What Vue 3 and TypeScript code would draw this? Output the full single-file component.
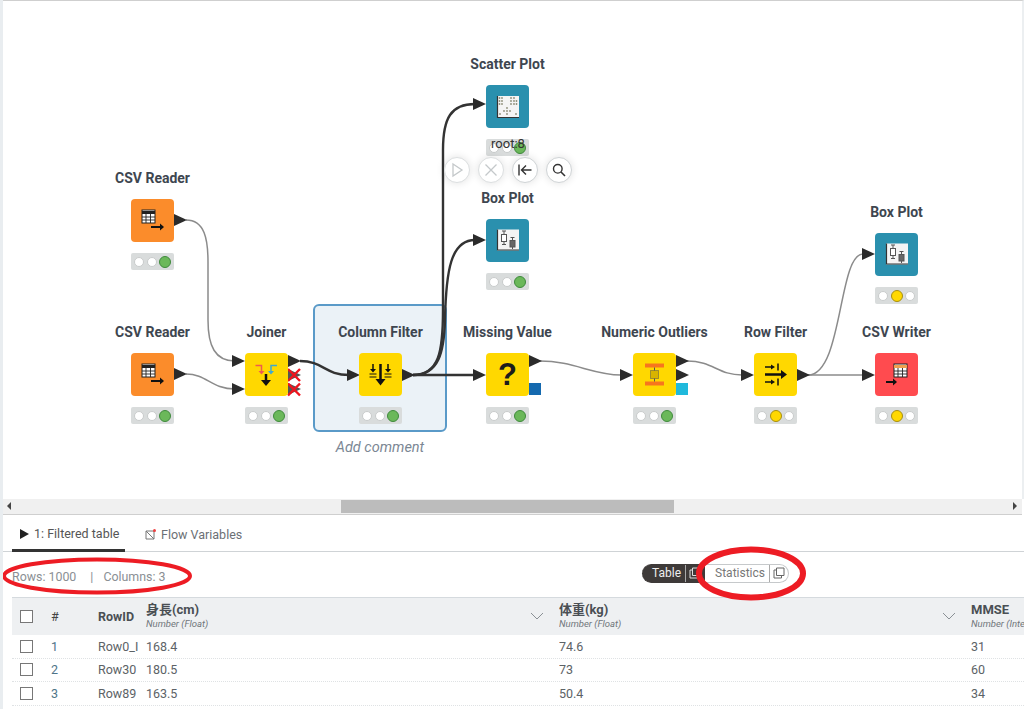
<template>
  <div class="page">
    <section class="canvas">
      <div class="selection"></div>
      <div class="comment">Add comment</div>

      <svg class="edges" width="1021" height="498" viewBox="0 0 1021 498">
        <path v-for="e in edges" :key="e.d" :d="e.d" :class="['edge', e.kind]" />
        <polygon
          v-for="p in ports"
          :key="p.x + '-' + p.y"
          :points="`${p.x},${p.y - 6} ${p.x + 13},${p.y} ${p.x},${p.y + 6}`"
          :fill="p.dim ? '#555' : '#2b2b2b'"
        />
        <rect x="526" y="383" width="12" height="12" fill="#1469af" />
        <rect x="673" y="383" width="12" height="12" fill="#20b9dc" />
        <g class="cross">
          <path d="M285 369l12 12m0-12l-12 12" />
          <path d="M285 383.500l12 12m0-12l-12 12" />
        </g>
      </svg>

      <div
        v-for="n in nodes"
        :key="n.label + n.x"
        class="node"
        :style="{ left: n.x - 50 + 'px', top: n.y - 31 + 'px' }"
      >
        <div class="label">{{ n.label }}</div>
        <div class="box" :style="{ background: colors[n.color] }">
          <svg width="43" height="43" viewBox="0 0 43 43">
            <template v-if="n.icon === 'reader'">
              <rect x="11" y="11" width="13" height="13" fill="#fff" stroke="#222" />
              <path d="M11 13.500h13" stroke="#222" stroke-width="3" />
              <path d="M11 18h13M11 21h13M15 15v9M19.500 15v9" stroke="#222" stroke-width="0.900" />
              <path d="M20 28h10" stroke="#111" stroke-width="2" />
              <path d="M29 24.500l4 3.500-4 3.500z" fill="#111" />
            </template>
            <template v-else-if="n.icon === 'writer'">
              <rect x="19" y="11" width="13" height="13" fill="#fff" stroke="#222" />
              <path d="M19 13.500h13" stroke="#f0a050" stroke-width="3" />
              <path d="M19 18h13M19 21h13M23 15v9M27.500 15v9" stroke="#222" stroke-width="0.900" />
              <path d="M11 29h8" stroke="#111" stroke-width="2" />
              <path d="M18 25.500l4 3.500-4 3.500z" fill="#111" />
            </template>
            <template v-else-if="n.icon === 'joiner'">
              <path d="M10.500 12.500h6v6" fill="none" stroke="#ef5a50" stroke-width="1.500" />
              <path d="M13.500 18h6l-3 3.500z" fill="#ef5a50" />
              <path d="M32 12.500h-6v6" fill="none" stroke="#3fa9d0" stroke-width="1.500" />
              <path d="M23 18h6l-3 3.500z" fill="#3fa9d0" />
              <path d="M21 21v8" stroke="#111" stroke-width="2.500" />
              <path d="M16 27h10l-5 6z" fill="#111" />
            </template>
            <template v-else-if="n.icon === 'column'">
              <path d="M21.500 11v17" stroke="#111" stroke-width="2.500" />
              <path d="M16.500 26h10l-5 6.500z" fill="#111" />
              <path d="M14 11v6M29 11v6" stroke="#111" stroke-width="1.500" />
              <path d="M11 16h6l-3 3.500zM26 16h6l-3 3.500z" fill="#111" />
              <path d="M10.500 21h7M10.500 24h7M25.500 21h7M25.500 24h7" stroke="#111" stroke-width="1.100" />
            </template>
            <template v-else-if="n.icon === 'missing'">
              <text x="21.500" y="32" text-anchor="middle" class="qmark">?</text>
            </template>
            <template v-else-if="n.icon === 'outliers'">
              <rect x="12" y="10.500" width="19" height="4" fill="#f7761e" />
              <rect x="12" y="28.500" width="19" height="4" fill="#f7761e" />
              <rect x="17.500" y="17.500" width="8" height="8" fill="#d8b400" stroke="#555" stroke-dasharray="1 1" />
              <path d="M21.500 14.500v3M21.500 25.500v3" stroke="#555" />
            </template>
            <template v-else-if="n.icon === 'row'">
              <path d="M11 21.500h18" stroke="#111" stroke-width="2.500" />
              <path d="M27 17l6 4.500-6 4.500z" fill="#111" />
              <path d="M11 14h7M11 29h7" stroke="#111" stroke-width="1.500" />
              <path d="M17 11.500l4 2.500-4 2.500zM17 26.500l4 2.500-4 2.500z" fill="#111" />
              <path d="M24 10.500v7M24 25.500v7" stroke="#111" stroke-width="1.500" />
            </template>
            <template v-else-if="n.icon === 'box'">
              <rect x="11" y="10.500" width="22" height="21" fill="#f4f4f4" />
              <path d="M11.500 10.500v20.500H33" fill="none" stroke="#333" stroke-width="1.200" />
              <path d="M16 12h4M18 12v3.500M18 22.500v3M16 25.500h4M24.500 18.500h4M26.500 18.500v3M26.500 28v2" stroke="#555" />
              <rect x="15.500" y="15.500" width="5" height="7" fill="#fff" stroke="#555" />
              <rect x="24" y="21.500" width="5" height="6.500" fill="#666" stroke="#555" />
            </template>
            <template v-else>
              <rect x="11" y="11" width="22" height="22" fill="#f4f4f4" />
              <path d="M11.500 11v21.500H33" fill="none" stroke="#333" stroke-width="1.200" />
              <g fill="#8d8d78">
                <circle v-for="d in scatterDots" :key="d[0] + '-' + d[1]" :cx="d[0]" :cy="d[1]" r="0.900" />
              </g>
            </template>
          </svg>
        </div>
        <div class="lights">
          <span v-for="i in [0, 1, 2]" :key="i" :class="['light', i === n.state ? (i === 2 ? 'green' : 'yellow') : '']"></span>
        </div>
      </div>

      <div class="node-name">root:8</div>
      <div class="toolbar">
        <button class="tool off">
          <svg width="16" height="16" viewBox="0 0 16 16"><path d="M4 2l9 6-9 6z" fill="none" stroke="#c4c8ca" stroke-width="1.300" /></svg>
        </button>
        <button class="tool off">
          <svg width="16" height="16" viewBox="0 0 16 16"><path d="M2.500 2.500l11 11m0-11l-11 11" stroke="#c4c8ca" stroke-width="1.300" /></svg>
        </button>
        <button class="tool">
          <svg width="16" height="16" viewBox="0 0 16 16"><path d="M2 2.500v11M14.500 8H5M9 3.500L4.500 8 9 12.500" fill="none" stroke="#333" stroke-width="1.400" /></svg>
        </button>
        <button class="tool">
          <svg width="16" height="16" viewBox="0 0 16 16"><circle cx="6.800" cy="6.800" r="4.300" fill="none" stroke="#333" stroke-width="1.400" /><path d="M10 10l4 4" stroke="#333" stroke-width="1.600" /></svg>
        </button>
      </div>
    </section>

    <div class="scrollbar">
      <span class="arrow left"></span>
      <span class="thumb"></span>
      <span class="arrow right"></span>
    </div>

    <section class="panel">
      <nav class="tabs">
        <div class="tab active">
          <svg width="9" height="10" viewBox="0 0 9 10"><path d="M0 0l9 5-9 5z" fill="#222" /></svg>
          1: Filtered table
        </div>
        <div class="tab">
          <svg width="11" height="11" viewBox="0 0 11 11">
            <path d="M1 2h8v8H1zM1 2l8 8" fill="none" stroke="#777" />
            <circle cx="9.500" cy="1.500" r="1.500" fill="#ef4040" />
          </svg>
          Flow Variables
        </div>
      </nav>

      <div class="info">
        <div class="counts">
          <span>Rows: 1000</span>
          <span class="sep">|</span>
          <span>Columns: 3</span>
        </div>
        <div class="switch">
          <div class="seg on">
            <span class="seg-text">Table</span>
            <span class="seg-icon">
              <svg width="12" height="12" viewBox="0 0 12 12"><path d="M3.500 1h7.500v7.500H3.500zM3.500 3H1v8h7.500V8.500" fill="none" stroke="#ddd" /></svg>
            </span>
          </div>
          <div class="seg">
            <span class="seg-text">Statistics</span>
            <span class="seg-icon">
              <svg width="12" height="12" viewBox="0 0 12 12"><path d="M3.500 1h7.500v7.500H3.500zM3.500 3H1v8h7.500V8.500" fill="none" stroke="#666" /></svg>
            </span>
          </div>
        </div>
      </div>

      <div class="table">
        <div class="row head">
          <div class="cell"><span class="check"></span></div>
          <div class="cell num">#</div>
          <div class="cell rowid">RowID</div>
          <div v-for="(c, i) in columns" :key="c.name" class="cell col">
            <div class="col-head">
              <div class="col-name">{{ c.name }}</div>
              <div class="col-type">{{ c.type }}</div>
            </div>
            <svg v-if="i < 2" class="chev" width="14" height="8" viewBox="0 0 14 8"><path d="M1 1l6 6 6-6" fill="none" stroke="#8a9095" /></svg>
          </div>
        </div>
        <div v-for="r in rows" :key="r.n" class="row">
          <div class="cell"><span class="check"></span></div>
          <div class="cell num">{{ r.n }}</div>
          <div class="cell rowid plain">{{ r.id }}</div>
          <div class="cell">{{ r.h }}</div>
          <div class="cell">{{ r.w }}</div>
          <div class="cell">{{ r.m }}</div>
        </div>
      </div>

      <svg class="marks" width="1024" height="194" viewBox="0 0 1024 194">
        <ellipse cx="97" cy="61" rx="93" ry="16.500" />
        <ellipse cx="751" cy="58.500" rx="52" ry="24" class="thick" />
      </svg>
    </section>
  </div>
</template>

<script setup lang="ts">
type Icon = 'reader' | 'writer' | 'joiner' | 'column' | 'missing' | 'outliers' | 'row' | 'box' | 'scatter'
type Color = 'orange' | 'yellow' | 'teal' | 'red'

interface WfNode {
  label: string
  x: number
  y: number
  color: Color
  icon: Icon
  state: number
}

const colors: Record<Color, string> = {
  orange: '#fb8c2b',
  yellow: '#ffd800',
  teal: '#2a90ae',
  red: '#ff4b4f',
}

const nodes: WfNode[] = [
  { label: 'Scatter Plot', x: 486, y: 85, color: 'teal', icon: 'scatter', state: 2 },
  { label: 'Box Plot', x: 486, y: 219, color: 'teal', icon: 'box', state: 2 },
  { label: 'CSV Reader', x: 131, y: 199, color: 'orange', icon: 'reader', state: 2 },
  { label: 'CSV Reader', x: 131, y: 353, color: 'orange', icon: 'reader', state: 2 },
  { label: 'Joiner', x: 245, y: 353, color: 'yellow', icon: 'joiner', state: 2 },
  { label: 'Column Filter', x: 359, y: 353, color: 'yellow', icon: 'column', state: 2 },
  { label: 'Missing Value', x: 486, y: 353, color: 'yellow', icon: 'missing', state: 2 },
  { label: 'Numeric Outliers', x: 633, y: 353, color: 'yellow', icon: 'outliers', state: 2 },
  { label: 'Row Filter', x: 754, y: 353, color: 'yellow', icon: 'row', state: 1 },
  { label: 'Box Plot', x: 875, y: 233, color: 'teal', icon: 'box', state: 1 },
  { label: 'CSV Writer', x: 875, y: 353, color: 'red', icon: 'writer', state: 1 },
]

// canvas starts at x = 3, y = 0
const edges = [
  { d: 'M183 220C202 220 205 240 205 262L205 320C205 346 212 361 232 361', kind: 'thin' },
  { d: 'M183 374C204 374 208 389 232 389', kind: 'thin' },
  { d: 'M297 361C320 361 322 375 346 375', kind: 'thick' },
  { d: 'M410 375C436 375 440 352 440 310L440 150C440 118 448 104 472 104', kind: 'thick' },
  { d: 'M410 375C436 375 441 352 442 320C443 270 448 240 472 240', kind: 'thick' },
  { d: 'M410 375H472', kind: 'thick' },
  { d: 'M537 361C570 361 590 375 618 375', kind: 'thin' },
  { d: 'M684 361C710 361 715 375 739 375', kind: 'thin' },
  { d: 'M805 375C840 375 835 254 860 254', kind: 'thin' },
  { d: 'M805 375H860', kind: 'thin' },
]

const ports = [
  { x: 171, y: 220 },
  { x: 171, y: 374 },
  { x: 229, y: 361 },
  { x: 229, y: 389 },
  { x: 285, y: 361 },
  { x: 285, y: 375, dim: true },
  { x: 285, y: 389, dim: true },
  { x: 344, y: 375 },
  { x: 399, y: 375 },
  { x: 470, y: 104 },
  { x: 470, y: 240 },
  { x: 470, y: 375 },
  { x: 526, y: 361 },
  { x: 617, y: 375 },
  { x: 673, y: 361 },
  { x: 673, y: 375 },
  { x: 738, y: 375 },
  { x: 794, y: 375 },
  { x: 859, y: 254 },
  { x: 859, y: 375 },
]

const scatterDots = [
  [13.5, 13], [16, 13], [13.5, 16], [16, 16], [13.5, 19], [16, 19],
  [25, 13], [28, 13], [25, 16], [28, 16], [25, 19], [28, 19], [30.5, 16], [30.5, 19],
  [21, 23], [18, 26], [21, 26], [24, 26], [21, 29], [14, 29], [30, 29],
]

const columns = [
  { name: '身長(cm)', type: 'Number (Float)' },
  { name: '体重(kg)', type: 'Number (Float)' },
  { name: 'MMSE', type: 'Number (Integer)' },
]

const rows = [
  { n: 1, id: 'Row0_I', h: '168.4', w: '74.6', m: '31' },
  { n: 2, id: 'Row30', h: '180.5', w: '73', m: '60' },
  { n: 3, id: 'Row89', h: '163.5', w: '50.4', m: '34' },
]
</script>

<style scoped>
.page {
  width: 1024px;
  height: 709px;
  overflow: hidden;
  display: flex;
  flex-direction: column;
  background: #fff;
  font-family: Roboto, "Noto Sans CJK JP", sans-serif;
  box-sizing: border-box;
  border-left: 3px solid #e9edf0;
}

.canvas {
  position: relative;
  height: 499px;
  flex: none;
  border-top: 1px solid #cfcfcf;
  border-right: 2px solid #eceff1;
  box-sizing: border-box;
}

.selection {
  position: absolute;
  left: 310px;
  top: 303px;
  width: 134px;
  height: 128px;
  box-sizing: border-box;
  background: #ebf2f7;
  border: 2px solid #5a9ac8;
  border-radius: 6px;
}

.comment {
  position: absolute;
  left: 310px;
  top: 437px;
  width: 134px;
  text-align: center;
  font-size: 14.500px;
  font-style: italic;
  color: #7b8794;
  line-height: 20px;
}

.edges {
  position: absolute;
  left: 0;
  top: -1px;
}

.edge {
  fill: none;
}

.edge.thin {
  stroke: #8b8b8b;
  stroke-width: 1.500;
}

.edge.thick {
  stroke: #333;
  stroke-width: 2.400;
}

.cross path {
  fill: none;
  stroke: #f0141e;
  stroke-width: 2.400;
}

.node {
  position: absolute;
  width: 143px;
  margin-left: -3px;
  margin-top: -1px;
  display: flex;
  flex-direction: column;
  align-items: center;
}

.label {
  height: 20px;
  line-height: 20px;
  margin-bottom: 11px;
  font-size: 14px;
  font-weight: 700;
  color: #3e4650;
  white-space: nowrap;
}

.box {
  width: 43px;
  height: 43px;
  border-radius: 4px;
}

.box svg {
  display: block;
}

.qmark {
  font-family: "Liberation Sans", sans-serif;
  font-size: 31px;
  font-weight: 700;
  fill: #1c1c1c;
}

.lights {
  margin-top: 11px;
  width: 43px;
  height: 17px;
  box-sizing: border-box;
  padding: 0 3px;
  display: flex;
  align-items: center;
  justify-content: space-between;
  background: #d9dcdc;
  border-radius: 2px;
}

.light {
  width: 10px;
  height: 10px;
  box-sizing: border-box;
  border-radius: 50%;
  background: #fff;
  border: 1px solid #c9cccc;
}

.light.green {
  width: 12px;
  height: 12px;
  background: #6bb85a;
  border-color: #3f8a3c;
}

.light.yellow {
  width: 12px;
  height: 12px;
  background: #ffd800;
  border-color: #a68e10;
}

.node-name {
  position: absolute;
  left: 455px;
  top: 134px;
  width: 100px;
  text-align: center;
  font-size: 13px;
  line-height: 18px;
  color: #333;
}

.toolbar {
  position: absolute;
  left: 441px;
  top: 156px;
  display: flex;
  gap: 8px;
}

.tool {
  width: 26px;
  height: 26px;
  padding: 0;
  display: flex;
  align-items: center;
  justify-content: center;
  background: #fff;
  border: 1.500px solid #d0d4d6;
  border-radius: 50%;
  box-shadow: 0 0 8px rgba(0, 0, 0, 0.12);
}

.tool.off {
  border-color: #dcdfe0;
}

.scrollbar {
  flex: none;
  height: 16px;
  position: relative;
  display: flex;
  align-items: center;
  background: #f0f0f0;
  border-bottom: 1px solid #cfcfcf;
  box-sizing: border-box;
  margin-right: 2px;
}

.thumb {
  position: absolute;
  left: 338px;
  width: 333px;
  top: 1px;
  bottom: 1px;
  background: #bcbcbc;
}

.arrow {
  position: absolute;
  top: 3px;
  border: 4px solid transparent;
}

.arrow.left {
  left: 4px;
  border-right: 4px solid #444;
  border-left-width: 0;
}

.arrow.right {
  right: 5px;
  border-left: 4px solid #444;
  border-right-width: 0;
}

.panel {
  flex: 1;
  position: relative;
  min-height: 0;
}

.tabs {
  height: 37px;
  box-sizing: border-box;
  padding-left: 9px;
  display: flex;
  gap: 20px;
  border-bottom: 1px solid #cfd3d6;
}

.tab {
  display: flex;
  align-items: center;
  gap: 5px;
  padding: 3px 0 0;
  height: 36px;
  box-sizing: border-box;
  font-size: 12.500px;
  color: #6b7075;
}

.tab.active {
  width: 113px;
  padding-left: 8px;
  color: #555;
  border-bottom: 3px solid #333;
  height: 37px;
}

.info {
  height: 45px;
  display: flex;
  align-items: center;
  padding: 0 0 0 9px;
}

.counts {
  width: 630px;
  display: flex;
  gap: 14px;
  margin-top: 4px;
  font-size: 12.400px;
  color: #8a8f94;
}

.sep {
  margin-right: -4px;
}

.switch {
  display: flex;
  height: 19px;
  margin-bottom: 3px;
  font-size: 12px;
}

.seg {
  display: flex;
  align-items: stretch;
  border: 1px solid #c6c9cb;
  border-left: none;
  border-radius: 0 10px 10px 0;
  color: #777;
  background: #fff;
  box-sizing: border-box;
}

.seg.on {
  background: #3e3a39;
  border-color: #3e3a39;
  border-radius: 10px 0 0 10px;
  color: #eee;
}

.seg-text {
  display: flex;
  align-items: center;
  padding: 0 4px 0 10px;
}

.seg-icon {
  display: flex;
  align-items: center;
  padding: 0 3px;
  border-left: 1px solid #aaa;
}

.table {
  margin-left: 9px;
  font-size: 12.500px;
  color: #5c6266;
}

.row {
  display: grid;
  grid-template-columns: 39px 47px 48px 413px 412px 60px;
  height: 23.500px;
  box-sizing: border-box;
  border-bottom: 1px dotted #dfe2e4;
}

.row.head {
  height: 38px;
  background: #eef0f2;
  border-top: 1px solid #d5dade;
  border-bottom: none;
}

.cell {
  display: flex;
  align-items: center;
  overflow: hidden;
  white-space: nowrap;
  position: relative;
}

.check {
  width: 13px;
  height: 13px;
  margin-left: 8px;
  box-sizing: border-box;
  background: #fff;
  border: 1px solid #777;
}

.num {
  color: #4e7488;
}

.head .num {
  color: #444;
}

.rowid {
  font-weight: 700;
  color: #4a4f54;
}

.rowid.plain {
  font-weight: 400;
  color: #5c6266;
  padding-right: 2px;
}

.col {
  justify-content: flex-start;
}

.col-head {
  padding-bottom: 2px;
}

.col-name {
  font-size: 13px;
  font-weight: 700;
  color: #4a4f54;
  line-height: 16px;
}

.col-type {
  font-size: 9.500px;
  font-style: italic;
  color: #70767b;
  line-height: 11px;
}

.chev {
  position: absolute;
  right: 15px;
  top: 14px;
}

.marks {
  position: absolute;
  left: -3px;
  top: 0;
  pointer-events: none;
}

.marks ellipse {
  fill: none;
  stroke: #ed1c24;
  stroke-width: 4;
}

.marks ellipse.thick {
  stroke-width: 6;
}
</style>
